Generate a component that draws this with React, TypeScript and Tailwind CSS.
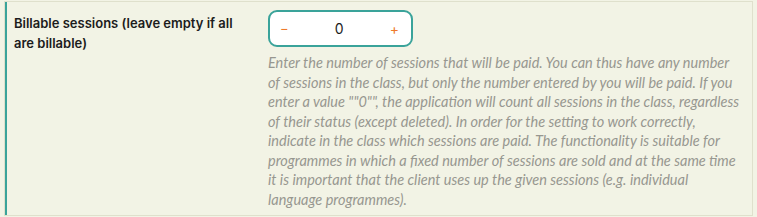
export default function App() {
  return (
    <div className="min-h-screen bg-[#f2f3e5] pl-1 pt-px" style={{ fontFamily: 'Inter, "Open Sans", sans-serif' }}>
      <div className="w-[749px] border border-[#dfe0cc]">
        <div className="flex h-[213px] border-l-2 border-[#3aa39a]">
          <div className="w-[261px] shrink-0 pl-[7px] pt-[11px]">
            <div className="w-[240px] text-[13px] font-semibold leading-[20px] text-[#1c1c1c]">
              Billable sessions (leave empty if all are billable)
            </div>
          </div>
          <div className="flex flex-col pt-[8px]">
            <div className="flex h-[37px] w-[145px] items-center justify-between rounded-[9px] border-2 border-[#3aa39a] bg-white pl-[10px] pr-[12px]">
              <button className="text-[13px] leading-none text-[#ee7a2b]">−</button>
              <span className="text-[14px] text-[#1c1c1c]">0</span>
              <button className="text-[14px] leading-none text-[#ee7a2b]">+</button>
            </div>
            <p
              className="mt-[6px] w-[476px] text-[14.5px] italic leading-[19.5px] text-[#979790]"
              style={{ fontFamily: 'Lato, "Open Sans", sans-serif' }}
            >
              Enter the number of sessions that will be paid. You can thus have any number of sessions in the class, but only the number entered by you will be paid. If you enter a value ""0"", the application will count all sessions in the class, regardless of their status (except deleted). In order for the setting to work correctly, indicate in the class which sessions are paid. The functionality is suitable for programmes in which a fixed number of sessions are sold and at the same time it is important that the client uses up the given sessions (e.g. individual language programmes).
            </p>
          </div>
        </div>
      </div>
    </div>
  )
}
